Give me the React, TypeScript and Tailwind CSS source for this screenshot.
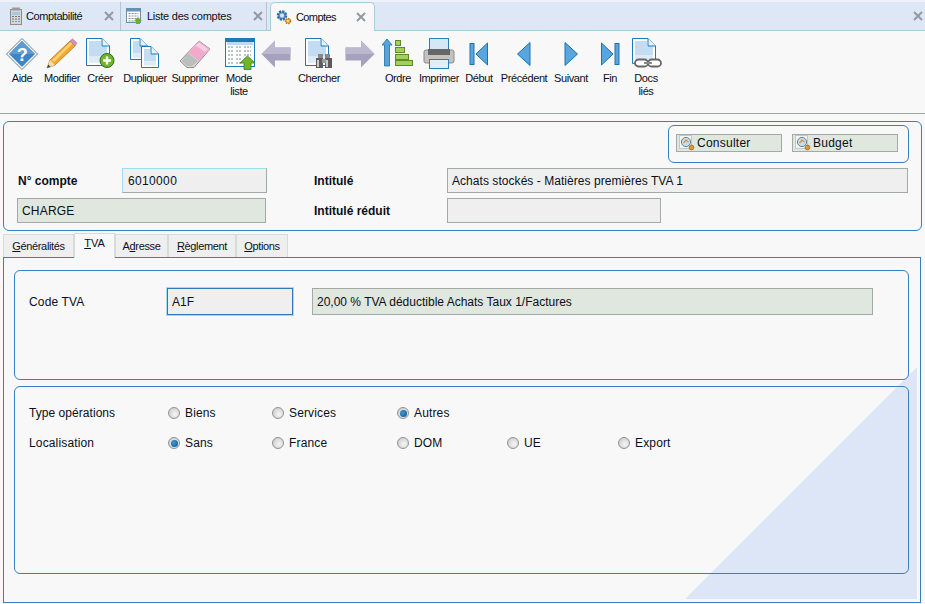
import type { ReactNode } from 'react';

const Svg = ({ children, className = 'size-8' }: { children: ReactNode; className?: string }) => (
  <svg viewBox="0 0 32 32" className={className}>{children}</svg>
);

const Doc = ({ x = 0, y = 0, w = 26, h = 28 }: { x?: number; y?: number; w?: number; h?: number }) => (
  <g>
    <path d={`M${x + 0.5} ${y + 0.5}H${x + w - 8}L${x + w - 0.5} ${y + 8}V${y + h - 0.5}H${x + 0.5}Z`} fill="#ffffff" stroke="#1c7ab8" />
    <rect x={x + 3} y={y + 3} width={w - 12} height={h * 0.55} fill="#c3dcf1" />
    <rect x={x + 3} y={y + 8} width={w - 6} height={h * 0.55 - 5} fill="#c3dcf1" />
    <rect x={x + 3} y={y + 3 + h * 0.55} width={w - 6} height={h * 0.3 - 2} fill="#dcebf5" />
    <path d={`M${x + w - 8} ${y + 0.5}V${y + 8}H${x + w - 0.5}`} fill="#e8f1f8" stroke="#1c7ab8" />
  </g>
);

const IconHelp = () => (
  <Svg>
    <path d="M16 0.5L31.5 16L16 31.5L0.5 16Z" fill="#ffffff" stroke="#5d7f9f" />
    <path d="M16 3L29 16L16 29L3 16Z" fill="#3f84c4" />
    <path d="M16 3L29 16H3Z" fill="#5d9bd4" />
    <text x="16" y="22.5" textAnchor="middle" fontSize="18" fontWeight="700" fontFamily="Liberation Sans" fill="#ffffff">?</text>
  </Svg>
);

const IconPencil = () => (
  <Svg>
    <path d="M1 30L4 22L24 3L29 8L9 27Z" fill="#f4a92c" stroke="#a87a2a" strokeWidth="0.8" />
    <path d="M6 22L25 4L26.5 5.5L8 24Z" fill="#fbd277" />
    <path d="M1 30L4 22L9 27Z" fill="#f2dcb3" />
    <path d="M1 30L2.3 26.4L4.6 28.7Z" fill="#444444" />
    <path d="M24 3L26.5 0.8L31 5L29 8Z" fill="#d98fb0" stroke="#a87a9a" strokeWidth="0.6" />
  </Svg>
);

const IconCreate = () => (
  <Svg>
    <Doc x={2} y={0} w={24} h={28} />
    <circle cx="23" cy="22.5" r="7" fill="#6bb52e" stroke="#35691a" />
    <path d="M23 18.5V26.5M19 22.5H27" stroke="#ffffff" strokeWidth="2.4" />
  </Svg>
);

const IconDuplicate = () => (
  <Svg>
    <Doc x={1} y={0} w={18} h={22} />
    <Doc x={12} y={8} w={18} h={22} />
  </Svg>
);

const IconEraser = () => (
  <Svg>
    <path d="M1 23L20 3L31 11L15 29.5H8Z" fill="#d4d6d4" stroke="#8c8f8c" />
    <path d="M9 14L20 3L31 11L20 23Z" fill="#f1a9cc" />
    <path d="M12 12L20 4.5L29 11L26 14L17 8Z" fill="#f8cfe3" />
    <path d="M3 23L9 15L19 23L13 28H8Z" fill="#bcbebc" />
  </Svg>
);

const IconList = () => (
  <Svg className="ml-[3px] size-8 shrink-0">
    <rect x="0.5" y="0.5" width="29" height="28" fill="#ffffff" stroke="#1c7ab8" />
    <rect x="1" y="1" width="28" height="3" fill="#1c7ab8" />
    <rect x="2" y="4" width="26" height="3" fill="#bcd9ee" />
    {[9, 13, 17, 21, 25].map(y => (
      <path key={y} d={`M3 ${y}H9M11 ${y}H17M19 ${y}H26`} stroke="#7b8a95" strokeWidth="1" strokeDasharray="2 1" />
    ))}
    <path d="M22.5 18L30 25H26V31.5H19V25H15Z" fill="#71b52d" stroke="#3f7d16" strokeWidth="0.8" />
  </Svg>
);

const IconArrowLeft = () => (
  <Svg>
    <path d="M1.5 16L15 2.5V9.5H30.5V22.5H15V29.5Z" fill="#a6a2bd" />
    <path d="M1.5 16L15 2.5V9.5H30.5V16Z" fill="#bcb8d0" />
  </Svg>
);

const IconArrowRight = () => (
  <Svg>
    <path d="M30.5 16L17 2.5V9.5H1.5V22.5H17V29.5Z" fill="#a6a2bd" />
    <path d="M30.5 16L17 2.5V9.5H1.5V16Z" fill="#bcb8d0" />
  </Svg>
);

const Binoculars = ({ x, y }: { x: number; y: number }) => (
  <g transform={`translate(${x} ${y})`}>
    <rect x="2" y="0" width="5" height="4" fill="#8a8a8a" />
    <rect x="9" y="0" width="5" height="4" fill="#8a8a8a" />
    <rect x="0" y="4" width="7" height="10" fill="#5c5c5c" />
    <rect x="9" y="4" width="7" height="10" fill="#5c5c5c" />
    <rect x="6" y="5" width="4" height="4" fill="#9a9a9a" />
    <rect x="1" y="6" width="2" height="7" fill="#c9c9c9" />
    <rect x="10" y="6" width="2" height="7" fill="#c9c9c9" />
  </g>
);

const IconSearchDoc = () => (
  <Svg>
    <Doc x={2} y={0} w={24} h={28} />
    <Binoculars x={13} y={16} />
  </Svg>
);

const IconOrder = () => (
  <Svg>
    <path d="M5 1L10 7H7.5V28H2.5V7H0Z" fill="#56a3dc" stroke="#1c6fa8" strokeWidth="0.8" />
    <rect x="13.5" y="2.5" width="5" height="5" fill="#a4cf5c" stroke="#5c8c22" />
    <rect x="13.5" y="9.5" width="9" height="5" fill="#a4cf5c" stroke="#5c8c22" />
    <rect x="13.5" y="16.5" width="13" height="5" fill="#a4cf5c" stroke="#5c8c22" />
    <rect x="13.5" y="22.5" width="17" height="5" fill="#a4cf5c" stroke="#5c8c22" />
  </Svg>
);

const IconPrinter = () => (
  <Svg>
    <rect x="6.5" y="0.5" width="19" height="12" fill="#d5e6f4" stroke="#2a7fb8" />
    <rect x="1" y="12" width="30" height="13" rx="2" fill="#c2c2c2" stroke="#8a8a8a" />
    <rect x="5" y="11" width="22" height="6" fill="#666666" />
    <rect x="6.5" y="21.5" width="19" height="9" fill="#e2eef7" stroke="#2a7fb8" />
  </Svg>
);

const NAV_FILL = '#5aa5dd';
const NAV_STROKE = '#1c72ad';

const IconFirst = () => (
  <Svg>
    <rect x="7" y="5.5" width="4" height="21" fill={NAV_FILL} stroke={NAV_STROKE} />
    <path d="M13 16L24.5 5V27Z" fill={NAV_FILL} stroke={NAV_STROKE} />
  </Svg>
);

const IconPrev = () => (
  <Svg>
    <path d="M9.5 16L22 4.5V27.5Z" fill={NAV_FILL} stroke={NAV_STROKE} />
  </Svg>
);

const IconNext = () => (
  <Svg>
    <path d="M22.5 16L10 4.5V27.5Z" fill={NAV_FILL} stroke={NAV_STROKE} />
  </Svg>
);

const IconLast = () => (
  <Svg>
    <path d="M19 16L7.5 5V27Z" fill={NAV_FILL} stroke={NAV_STROKE} />
    <rect x="21" y="5.5" width="4" height="21" fill={NAV_FILL} stroke={NAV_STROKE} />
  </Svg>
);

const IconLinkedDoc = () => (
  <Svg>
    <Doc x={2} y={0} w={24} h={26} />
    <rect x="5" y="21.5" width="13" height="7" rx="3.5" fill="#ffffff" stroke="#666666" strokeWidth="1.8" />
    <rect x="18" y="21.5" width="13" height="7" rx="3.5" fill="#ffffff" stroke="#666666" strokeWidth="1.8" />
    <path d="M14 25H22" stroke="#888888" strokeWidth="2" />
  </Svg>
);

const IconCalc = () => (
  <svg viewBox="0 0 16 18" className="h-[18px] w-4 shrink-0">
    <rect x="2.5" y="2.5" width="11" height="15" fill="#d6d6d6" stroke="#8d8d8d" />
    <rect x="4" y="0.5" width="8" height="3" fill="#9c9c9c" />
    <rect x="4" y="5" width="8" height="3" fill="#a7c8e4" />
    {[9.5, 12].map(y => (
      <path key={y} d={`M4 ${y}H12`} stroke="#777777" strokeWidth="1.2" strokeDasharray="2 1" />
    ))}
    <path d="M4 14.5H12" stroke="#e08a3c" strokeWidth="1.2" strokeDasharray="2 1" />
  </svg>
);

const IconSmallList = () => (
  <svg viewBox="0 0 16 16" className="size-4 shrink-0">
    <rect x="0.5" y="0.5" width="14" height="14" fill="#ffffff" stroke="#6c8fa8" />
    <rect x="1" y="1" width="13" height="2.5" fill="#5e94c0" />
    {[5.5, 8, 10.5, 13].map(y => (
      <path key={y} d={`M2.5 ${y}H12.5`} stroke="#8a8a8a" strokeDasharray="2 1" />
    ))}
    <path d="M12 9L16 13H14V16H10V13H8Z" fill="#6db02e" />
  </svg>
);

const IconGears = () => (
  <svg viewBox="0 0 16 16" className="size-4 shrink-0">
    <circle cx="6" cy="6.5" r="4" fill="#6f9fd0" stroke="#2d6ba8" strokeWidth="2.6" strokeDasharray="2 1.1" />
    <circle cx="6" cy="6.5" r="2" fill="#dbe8f5" />
    <circle cx="12" cy="12" r="2.5" fill="#f0ae3a" stroke="#b87716" strokeWidth="1.6" strokeDasharray="1.4 0.9" />
    <circle cx="12" cy="12" r="1" fill="#fbe6bd" />
  </svg>
);

const IconLens = () => (
  <svg viewBox="0 0 16 16" className="size-4 shrink-0">
    <rect x="0.5" y="0.5" width="12" height="13" fill="#f4f4f4" stroke="#a0a0a0" strokeDasharray="1 1" />
    <circle cx="7" cy="7" r="4.6" fill="#bfe0f4" stroke="#6e7f8c" />
    <path d="M4.5 8L7 5L9.5 7" fill="none" stroke="#e58a2c" strokeWidth="1.2" />
    <circle cx="12.5" cy="12.5" r="2.4" fill="#d99a3e" stroke="#8f6220" strokeWidth="0.7" />
  </svg>
);

const CloseX = ({ className = '' }: { className?: string }) => (
  <svg viewBox="0 0 10 10" className={`size-[10px] shrink-0 ${className}`}>
    <path d="M1 1L9 9M9 1L1 9" stroke="#8f9aa3" strokeWidth="2" />
  </svg>
);

const TOOLS = [
  { label: 'Aide', w: 'w-[38px]', icon: <IconHelp /> },
  { label: 'Modifier', w: 'w-[42px]', icon: <IconPencil /> },
  { label: 'Créer', w: 'w-[34px]', icon: <IconCreate /> },
  { label: 'Dupliquer', w: 'w-[56px]', icon: <IconDuplicate /> },
  { label: 'Supprimer', w: 'w-[44px]', icon: <IconEraser /> },
  { label: 'Mode\nliste', w: 'w-[44px]', icon: <IconList /> },
  { label: '', w: 'w-[30px]', icon: <IconArrowLeft /> },
  { label: 'Chercher', w: 'w-[56px]', icon: <IconSearchDoc /> },
  { label: '', w: 'w-[26px]', icon: <IconArrowRight /> },
  { label: 'Ordre', w: 'w-[50px]', icon: <IconOrder /> },
  { label: 'Imprimer', w: 'w-[32px]', icon: <IconPrinter /> },
  { label: 'Début', w: 'w-[48px]', icon: <IconFirst /> },
  { label: 'Précédent', w: 'w-[42px]', icon: <IconPrev /> },
  { label: 'Suivant', w: 'w-[52px]', icon: <IconNext /> },
  { label: 'Fin', w: 'w-[26px]', icon: <IconLast /> },
  { label: 'Docs\nliés', w: 'w-[46px]', icon: <IconLinkedDoc /> },
];

const FIELD_TONE = {
  gray: 'border-[#a3a9a6] bg-[#efefef]',
  green: 'border-[#a3a9a6] bg-[#dfe7de]',
  focus: 'border-[#2f79b8] bg-[#efefef] outline outline-[#9ce0ee]',
  hover: 'border-[#a3a9a6] border-t-[#9ce0ee] border-l-[#9ce0ee] bg-[#efefef]',
};

const Field = ({ value = '', className = '', tone = 'gray' }: { value?: string; className?: string; tone?: keyof typeof FIELD_TONE }) => (
  <div className={`flex h-[25px] items-center border px-1 ${FIELD_TONE[tone]} ${className}`}>
    {value}
  </div>
);

const Radio = ({ label, checked = false, className = '' }: { label: string; checked?: boolean; className?: string }) => (
  <div className={`flex items-center gap-[5px] ${className}`}>
    <span className="flex size-[12px] items-center justify-center rounded-full border border-[#8e9491] bg-[radial-gradient(circle_at_60%_60%,#f6f6f6,#c4c4c4)]">
      {checked && <span className="size-[7px] rounded-full bg-[radial-gradient(circle_at_40%_40%,#3a9ad9,#0b4f86)]" />}
    </span>
    {label}
  </div>
);

const SearchButton = ({ label }: { label: string }) => (
  <div className="flex h-[18px] w-[106px] items-center gap-[2px] border border-[#a3a9a6] bg-[#dfe7de] pl-[2px] tracking-[0.25px]">
    <IconLens />
    {label}
  </div>
);

const PAGE_TABS = [
  { label: 'Généralités', key: 'G', rest: 'énéralités', w: 'w-[71px]' },
  { label: 'TVA', key: 'T', rest: 'VA', w: 'w-[41px]', active: true },
  { label: 'Adresse', key: 'd', pre: 'A', rest: 'resse', w: 'w-[53px]' },
  { label: 'Règlement', key: 'R', rest: 'èglement', w: 'w-[68px]' },
  { label: 'Options', key: 'O', rest: 'ptions', w: 'w-[52px]' },
];

export default function App() {
  return (
    <div className="flex h-[604px] w-[925px] flex-col overflow-hidden bg-[#f8f8f8] font-['Liberation_Sans',sans-serif] text-[12px] text-[#0a0f1a]">
      {/* window tabs */}
      <div className="flex h-[31px] shrink-0 items-end border-t-2 border-b border-t-[#eef2fa] border-b-[#a9cdd8] bg-[#dee7f6] text-[11px] tracking-[-0.4px]">
        <div className="flex h-[28px] w-[121px] items-center border-r border-[#b5c4cf] pl-2">
          <IconCalc />
          <span className="ml-[2px] flex-1">Comptabilité</span>
          <CloseX className="mr-[6px]" />
        </div>
        <div className="flex h-[28px] w-[146px] items-center border-r border-[#b5c4cf] pl-[5px]">
          <IconSmallList />
          <span className="ml-[5px] flex-1 tracking-[-0.25px]">Liste des comptes</span>
          <CloseX className="mr-[3px]" />
        </div>
        <div className="relative top-px ml-[3px] flex h-[29px] w-[105px] items-center rounded-t-[5px] border border-b-0 border-[#a9cdd8] bg-[#f8f8f8] pl-[5px]">
          <IconGears />
          <span className="ml-1 flex-1 tracking-[-0.6px]">Comptes</span>
          <CloseX className="mr-2" />
        </div>
        <div className="flex h-[28px] flex-1 items-center justify-end pr-[2px]">
          <CloseX />
        </div>
      </div>

      {/* toolbar */}
      <div className="flex h-[83px] shrink-0 items-start border-b border-[#9ea5a5] pt-[7px] pl-[3px] text-[11px] leading-[13px] tracking-[-0.4px]">
        {TOOLS.map((t, i) => (
          <div key={i} className={`flex flex-col items-center ${t.w}`}>
            <div className="flex h-[32px] w-[32px] shrink-0 justify-center">{t.icon}</div>
            <span className="mt-[2px] w-[60px] shrink-0 text-center whitespace-pre-line">{t.label}</span>
          </div>
        ))}
      </div>

      {/* header form */}
      <div className="mx-[3px] mt-[7px] h-[110px] w-[919px] shrink-0 rounded-[6px] border border-[#3a7fc1] pl-[13px]">
        <div className="flex h-[46px] items-start justify-end pt-[3px] pr-[12px]">
          <div className="h-[38px] w-[241px] rounded-[6px] border border-[#3a7fc1] pt-[8px] pl-[7px]">
            <div className="flex gap-[10px]">
              <SearchButton label="Consulter" />
              <SearchButton label="Budget" />
            </div>
          </div>
        </div>
        <div className="flex items-center">
          <span className="ml-px w-[104px] font-bold">N° compte</span>
          <Field value="6010000" tone="hover" className="w-[145px] pl-[5px] tracking-[0.35px]" />
          <span className="ml-[47px] w-[133px] font-bold">Intitulé</span>
          <Field value="Achats stockés - Matières premières TVA 1" className="w-[461px] tracking-[0.05px]" />
        </div>
        <div className="mt-[5px] flex items-center">
          <Field value="CHARGE" tone="green" className="w-[249px] tracking-[0.2px]" />
          <span className="ml-[48px] w-[133px] font-bold">Intitulé réduit</span>
          <Field className="w-[214px]" />
        </div>
      </div>

      {/* page tabs */}
      <div className="relative z-10 mt-[2px] flex h-[24px] shrink-0 items-end pl-[3px] text-[11px] tracking-[-0.35px]">
        {PAGE_TABS.map(t => (
          <div
            key={t.label}
            className={`flex items-center justify-center border border-b-0 border-[#d4dcdc] ${t.w} ${
              t.active ? 'relative top-px h-[25px] bg-[#f8f8f8] pb-[6px] tracking-[0px]' : 'h-[23px] bg-[#efefef]'
            }`}
          >
            {t.pre}
            <span className="underline">{t.key}</span>
            {t.rest}
          </div>
        ))}
      </div>

      {/* page body */}
      <div className="relative ml-[3px] h-[346px] w-[918px] shrink-0 border border-[#3a7fc1] px-[10px] pt-[12px]">
        <div className="absolute right-[3px] bottom-[3px] size-[232px] bg-[#dde6f6] [clip-path:polygon(100%_0,100%_100%,0_100%)]" />

        <div className="relative h-[110px] w-[895px] rounded-[6px] border border-[#3a7fc1] pt-[17px] pl-[14px]">
          <div className="flex items-center">
            <span className="w-[138px] tracking-[0.15px]">Code TVA</span>
            <Field value="A1F" tone="focus" className="h-[27px] w-[126px]" />
            <Field value="20,00 % TVA déductible Achats Taux 1/Factures" tone="green" className="ml-[19px] h-[27px] w-[561px]" />
          </div>
        </div>

        <div className="relative mt-[6px] h-[188px] w-[895px] rounded-[6px] border border-[#3a7fc1] pt-[19px] pl-[14px] tracking-[0.15px]">
          <div className="flex h-[14px] items-center">
            <span className="w-[139px] tracking-[0.05px]">Type opérations</span>
            <Radio label="Biens" className="w-[104px]" />
            <Radio label="Services" className="w-[125px]" />
            <Radio label="Autres" checked />
          </div>
          <div className="mt-[16px] flex h-[14px] items-center">
            <span className="w-[139px]">Localisation</span>
            <Radio label="Sans" checked className="w-[104px]" />
            <Radio label="France" className="w-[125px]" />
            <Radio label="DOM" className="w-[110px]" />
            <Radio label="UE" className="w-[111px]" />
            <Radio label="Export" />
          </div>
        </div>
      </div>
    </div>
  );
}
